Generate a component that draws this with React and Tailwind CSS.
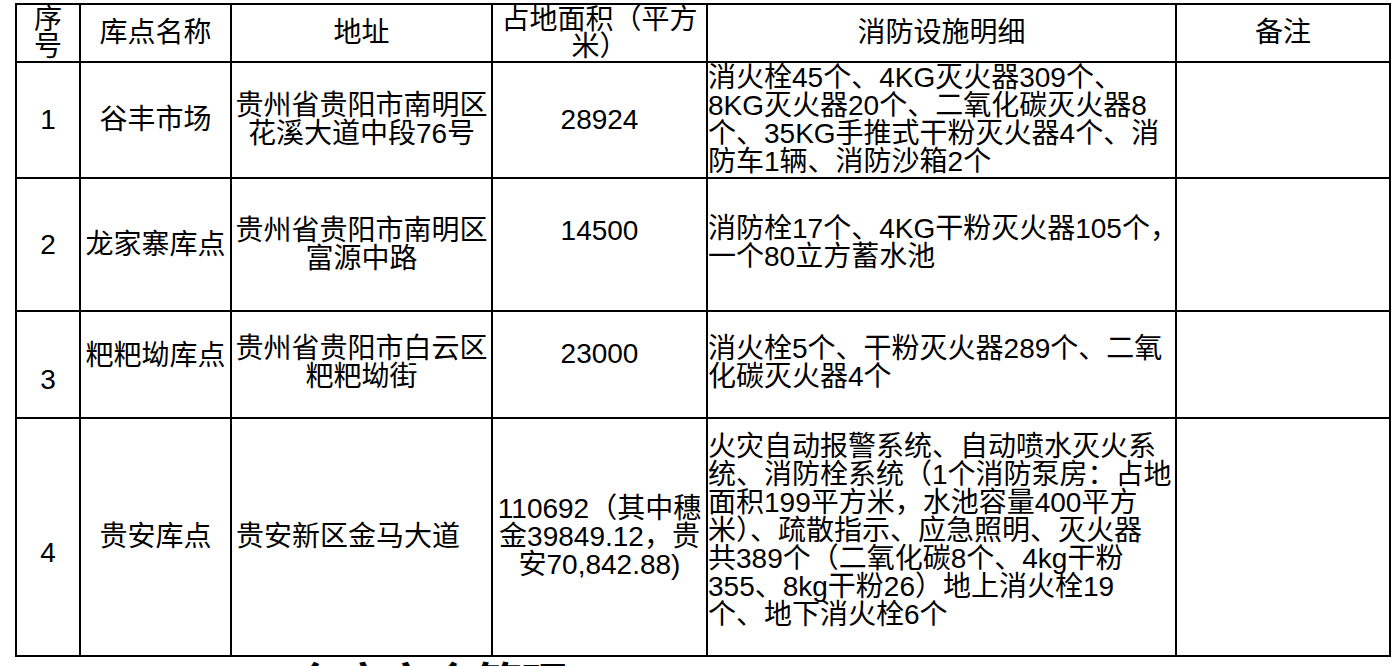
const ROWS = [
  {
    no: '1',
    name: '谷丰市场',
    addr: ['贵州省贵阳市南明区', '花溪大道中段76号'],
    area: ['28924'],
    fire: ['消火栓45个、4KG灭火器309个、', '8KG灭火器20个、二氧化碳灭火器8', '个、35KG手推式干粉灭火器4个、消', '防车1辆、消防沙箱2个'],
    pad: { no: '', name: '', addr: 'justify-center text-center', area: '', fire: '' },
  },
  {
    no: '2',
    name: '龙家寨库点',
    addr: ['贵州省贵阳市南明区', '富源中路'],
    area: ['14500'],
    fire: ['消防栓17个、4KG干粉灭火器105个，', '一个80立方蓄水池'],
    pad: { no: '', name: '', addr: 'justify-center text-center', area: 'pb-[28px]', fire: 'pb-[4px]' },
  },
  {
    no: '3',
    name: '粑粑坳库点',
    addr: ['贵州省贵阳市白云区', '粑粑坳街'],
    area: ['23000'],
    fire: ['消火栓5个、干粉灭火器289个、二氧', '化碳灭火器4个'],
    pad: { no: 'pt-[30px]', name: 'pb-[18px]', addr: 'justify-center text-center pb-[4px]', area: 'pb-[22px]', fire: 'pb-[4px]' },
  },
  {
    no: '4',
    name: '贵安库点',
    addr: ['贵安新区金马大道'],
    area: ['110692（其中穗', '金39849.12，贵', '安70,842.88)'],
    fire: ['火灾自动报警系统、自动喷水灭火系', '统、消防栓系统（1个消防泵房：占地', '面积199平方米，水池容量400平方', '米）、疏散指示、应急照明、灭火器', '共389个（二氧化碳8个、4kg干粉', '355、8kg干粉26）地上消火栓19', '个、地下消火栓6个'],
    pad: { no: 'pt-[32px]', name: '', addr: 'justify-start text-left pl-[4px]', area: '', fire: 'pb-[12px]' },
  },
];

const cell = 'border-r-2 border-b-2 border-black flex items-center min-w-0 overflow-hidden';

function Lines({ lines, className = '' }) {
  return (
    <div className={className}>
      {lines.map((l, i) => (
        <div key={i} className="whitespace-nowrap">{l}</div>
      ))}
    </div>
  );
}

export default function App() {
  return (
    <div
      className="w-[1396px] h-[666px] overflow-hidden bg-white text-black pt-[3px] pl-[15px]"
      style={{ fontFamily: '"Liberation Sans", "Noto Sans CJK SC", sans-serif' }}
    >
      <div className="w-[1376px] grid grid-cols-[64px_151px_261px_215px_469px_214px] grid-rows-[58px_116px_133px_107px_238px] border-t-2 border-l-2 border-black text-[28px] leading-[28px]">
        <div className={`${cell} justify-center text-center`}>
          <Lines lines={['序', '号']} className="leading-[27px]" />
        </div>
        <div className={`${cell} justify-center`}>库点名称</div>
        <div className={`${cell} justify-center`}>地址</div>
        <div className={`${cell} justify-center text-center`}>
          <Lines lines={['占地面积（平方', '米）']} className="leading-[27px]" />
        </div>
        <div className={`${cell} justify-center`}>消防设施明细</div>
        <div className={`${cell} justify-center`}>备注</div>

        {ROWS.map(r => (
          <div key={r.no} className="contents">
            <div className={`${cell} justify-center ${r.pad.no}`}>{r.no}</div>
            <div className={`${cell} justify-center whitespace-nowrap ${r.pad.name}`}>{r.name}</div>
            <div className={`${cell} ${r.pad.addr}`}>
              <Lines lines={r.addr} />
            </div>
            <div className={`${cell} justify-center text-center ${r.pad.area}`}>
              <Lines lines={r.area} />
            </div>
            <div className={`${cell} justify-start text-left ${r.pad.fire}`}>
              <Lines lines={r.fire} />
            </div>
            <div className={cell}></div>
          </div>
        ))}
      </div>
      <div className="pl-[185px] pt-[5px] text-[46px] leading-[46px] font-bold whitespace-nowrap">
        五、仓库安全管理
      </div>
    </div>
  );
}
